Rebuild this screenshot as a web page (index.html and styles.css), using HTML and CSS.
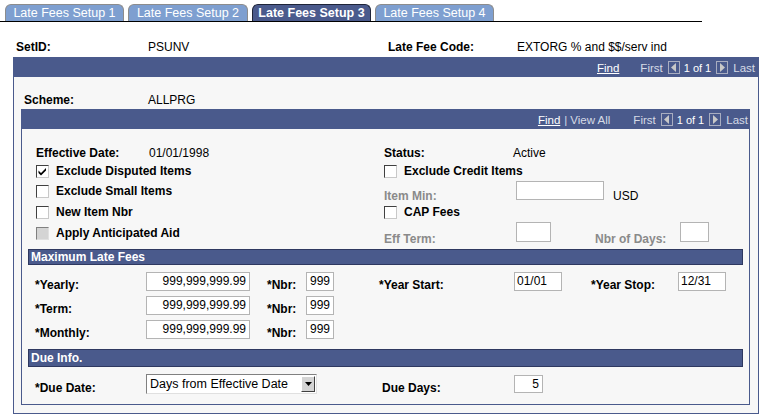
FILE: index.html
```html
<!DOCTYPE html>
<html>
<head>
<meta charset="utf-8">
<link rel="stylesheet" href="styles.css">
</head>
<body>
<div class="tabs">
  <div class="tab">Late Fees Setup 1</div>
  <div class="tab">Late Fees Setup 2</div>
  <div class="tab active">Late Fees Setup 3</div>
  <div class="tab">Late Fees Setup 4</div>
</div>

<div class="keyrow">
  <span class="lbl k1">SetID:</span><span class="k2">PSUNV</span>
  <span class="lbl k3">Late Fee Code:</span><span>EXTORG % and $$/serv ind</span>
</div>

<div class="outer">
  <div class="bar nav nav-outer">
    <span class="link">Find</span>
    <span class="dim first">First</span>
    <span class="arr"><svg width="10" height="11" viewBox="0 0 10 11"><path d="M7 1 L2 5.5 L7 10 Z" fill="#c8c8c8"/></svg></span>
    <span class="count">1 of 1</span>
    <span class="arr"><svg width="10" height="11" viewBox="0 0 10 11"><path d="M3 1 L8 5.5 L3 10 Z" fill="#c8c8c8"/></svg></span>
    <span class="dim last">Last</span>
  </div>
  <div class="scheme">
    <span class="lbl sc1">Scheme:</span><span>ALLPRG</span>
  </div>

  <div class="inner">
    <div class="bar nav nav-inner">
      <span class="link">Find</span>
      <span class="dim sep">|</span>
      <span class="dim">View All</span>
      <span class="dim first first-in">First</span>
      <span class="arr"><svg width="10" height="11" viewBox="0 0 10 11"><path d="M7 1 L2 5.5 L7 10 Z" fill="#c8c8c8"/></svg></span>
      <span class="count">1 of 1</span>
      <span class="arr"><svg width="10" height="11" viewBox="0 0 10 11"><path d="M3 1 L8 5.5 L3 10 Z" fill="#c8c8c8"/></svg></span>
      <span class="dim last">Last</span>
    </div>

    <div class="top">
      <div class="row r1">
        <div class="left"><span class="lbl w113">Effective Date:</span><span>01/01/1998</span></div>
        <div class="right"><span class="lbl w129">Status:</span><span>Active</span></div>
      </div>
      <div class="row r2">
        <div class="left"><span class="cb"><svg width="11" height="11" viewBox="0 0 11 11"><path d="M1.5 4.5 L4 7 L9 2 L9 4.5 L4 9.5 L1.5 7 Z" fill="#000"/></svg></span><span class="lbl">Exclude Disputed Items</span></div>
        <div class="right"><span class="cb"></span><span class="lbl">Exclude Credit Items</span></div>
      </div>
      <div class="row r3">
        <div class="left"><span class="cb"></span><span class="lbl">Exclude Small Items</span></div>
        <div class="right bottom"><span class="lbl gray w132">Item Min:</span><span class="inp w88"></span><span class="usd">USD</span></div>
      </div>
      <div class="row r4">
        <div class="left"><span class="cb"></span><span class="lbl">New Item Nbr</span></div>
        <div class="right"><span class="cb"></span><span class="lbl">CAP Fees</span></div>
      </div>
      <div class="row r5">
        <div class="left"><span class="cb dis"></span><span class="lbl">Apply Anticipated Aid</span></div>
        <div class="right bottom"><span class="lbl gray w132">Eff Term:</span><span class="inp w35 h20"></span><span class="lbl gray nod">Nbr of Days:</span><span class="inp w29 h20"></span></div>
      </div>
    </div>

    <div class="section">Maximum Late Fees</div>
    <div class="fees">
      <div class="frow">
        <span class="lbl fl">*Yearly:</span><span class="inp amt">999,999,999.99</span>
        <span class="lbl nb">*Nbr:</span><span class="inp w28">999</span>
        <span class="lbl ys">*Year Start:</span><span class="inp w48 left-t">01/01</span>
        <span class="lbl yt">*Year Stop:</span><span class="inp w48 left-t">12/31</span>
      </div>
      <div class="frow">
        <span class="lbl fl">*Term:</span><span class="inp amt">999,999,999.99</span>
        <span class="lbl nb">*Nbr:</span><span class="inp w28">999</span>
      </div>
      <div class="frow">
        <span class="lbl fl">*Monthly:</span><span class="inp amt">999,999,999.99</span>
        <span class="lbl nb">*Nbr:</span><span class="inp w28">999</span>
      </div>
    </div>

    <div class="section due">Due Info.</div>
    <div class="frow duerow">
      <span class="lbl fl">*Due Date:</span>
      <span class="select"><span class="sel-t">Days from Effective Date</span><span class="sel-b"><svg width="7" height="4" viewBox="0 0 7 4"><path d="M0 0 L7 0 L3.5 4 Z" fill="#000"/></svg></span></span>
      <span class="lbl dd">Due Days:</span><span class="inp w29 h18">5</span>
    </div>
  </div>
</div>
</body>
</html>
```

FILE: styles.css
```css
* { box-sizing: border-box; }
body {
  margin: 0;
  font-family: "Liberation Sans", Arial, sans-serif;
  font-size: 12px;
  color: #000;
  background: #fff;
}
.lbl { font-weight: bold; }
.gray { color: #8a8a8a; }

.tabs {
  display: flex;
  gap: 4px;
  width: 702px;
  height: 22px;
  padding: 4px 0 0 5px;
  border-bottom: 1px solid #000;
}
.tab {
  width: 119px;
  height: 17px;
  background: #7e9fd0;
  border: 1px solid #8c8c8c;
  border-bottom: none;
  border-radius: 6px 6px 0 0;
  color: #fff;
  font-size: 12.5px;
  line-height: 16px;
  text-align: center;
}
.tab:nth-child(2) { width: 120px; }
.tab.active {
  background: #4a5a8c;
  border-color: #1e2438;
  font-weight: bold;
}

.keyrow {
  display: flex;
  margin: 18px 0 0 16px;
  line-height: 14px;
}
.k1 { width: 132px; }
.k2 { width: 240px; }
.k3 { width: 129px; }

.outer {
  margin: 3px 0 0 13px;
  width: 746px;
  border: 1px solid #4a5a8c;
  background: #f7f7f7;
  padding-bottom: 8px;
}
.bar {
  background: #4a5a8c;
  color: #fff;
}
.nav {
  display: flex;
  justify-content: flex-end;
  align-items: center;
  height: 19px;
  font-size: 11.5px;
}
.nav-outer { padding-right: 3px; }
.nav-inner { padding-right: 1px; }
.link { color: #fff; text-decoration: underline; }
.dim { color: #d6dae6; }
.sep { margin: 0 3px 0 4px; }
.first { margin-left: 21px; margin-right: 5px; }
.first-in { margin-left: 23px; }
.last { margin-left: 5px; }
.count { color: #fff; font-size: 11px; margin: 0 5px 0 4px; }
.arr {
  display: flex;
  align-items: center;
  justify-content: center;
  width: 12px;
  height: 13px;
  border: 1px solid #a8adc0;
}

.scheme {
  display: flex;
  margin: 16px 0 0 10px;
  line-height: 14px;
}
.sc1 { width: 124px; }

.inner {
  margin: 2px 0 0 7px;
  width: 729px;
  border: 1px solid #4a5a8c;
  background: #f7f7f7;
  padding-bottom: 8px;
}

.top { padding: 15px 0 0 14px; }
.row { display: flex; }
.r1 { height: 18px; }
.r2 { height: 18px; }
.r3 { height: 22px; }
.r4 { height: 20px; }
.r5 { height: 22px; }
.left { width: 348px; display: flex; align-items: center; }
.right { display: flex; align-items: center; }
.right.bottom { align-items: flex-end; }
.r3 .right.bottom .lbl, .r3 .usd { margin-bottom: -1px; line-height: 14px; }
.r3 .inp { margin-bottom: 2px; margin-top: 1px; }
.r5 .right.bottom .lbl { line-height: 14px; margin-bottom: -2px; }
.r5 .inp { margin-bottom: 2px; }
.w113 { width: 113px; }
.w129 { width: 129px; }
.w132 { width: 132px; }
.usd { margin-left: 9px; }
.nod { margin-left: 44px; width: 85px; }

.cb {
  display: inline-flex;
  align-items: center;
  justify-content: center;
  width: 13px;
  height: 13px;
  background: #fff;
  border: 1px solid;
  border-color: #404040 #c8c8c8 #c8c8c8 #404040;
  margin-right: 7px;
}
.cb.dis { background: #d4d4d4; border-color: #808080 #e0e0e0 #e0e0e0 #808080; }

.inp {
  display: inline-block;
  height: 19px;
  background: #fff;
  border: 1px solid #b4b4b4;
  line-height: 17px;
  padding: 0 3px;
  text-align: right;
  font-size: 12px;
}
.inp.left-t { text-align: left; padding-left: 2px; }
.w88 { width: 88px; }
.w35 { width: 35px; }
.w29 { width: 29px; }
.w28 { width: 28px; }
.w48 { width: 48px; }
.h20 { height: 20px; }
.h18 { height: 18px; line-height: 16px; }
.amt { width: 104px; }

.section {
  margin: 5px 0 0 6px;
  width: 715px;
  height: 16px;
  background: #4a5a8c;
  border: 1px solid #2e3860;
  color: #fff;
  font-weight: bold;
  line-height: 14px;
  padding-left: 2px;
}
.section.due { height: 18px; line-height: 16px; }

.fees { padding-top: 7px; }
.frow {
  display: flex;
  align-items: flex-start;
  height: 24px;
  padding-left: 13px;
}
.frow .lbl { padding-top: 6px; line-height: 14px; }
.fl { width: 111px; }
.nb { margin-left: 17px; width: 39px; }
.ys { margin-left: 45px; width: 135px; }
.yt { margin-left: 29px; width: 87px; }

.duerow { margin-top: 5px; height: 24px; }
.duerow .lbl { padding-top: 9px; }
.select {
  display: flex;
  width: 171px;
  height: 20px;
  background: #fff;
  border: 1px solid;
  border-color: #808080 #e0e0e0 #e0e0e0 #808080;
  margin-top: 2px;
}
.sel-t { flex: 1; padding-left: 3px; line-height: 18px; font-size: 12.5px; }
.sel-b {
  width: 14px;
  margin: 1px;
  background: #d4d4d4;
  border: 1px solid;
  border-color: #fff #404040 #404040 #fff;
  display: flex;
  align-items: center;
  justify-content: center;
}
.dd { margin-left: 65px; width: 132px; }
.duerow .inp { margin-top: 3px; }
```
